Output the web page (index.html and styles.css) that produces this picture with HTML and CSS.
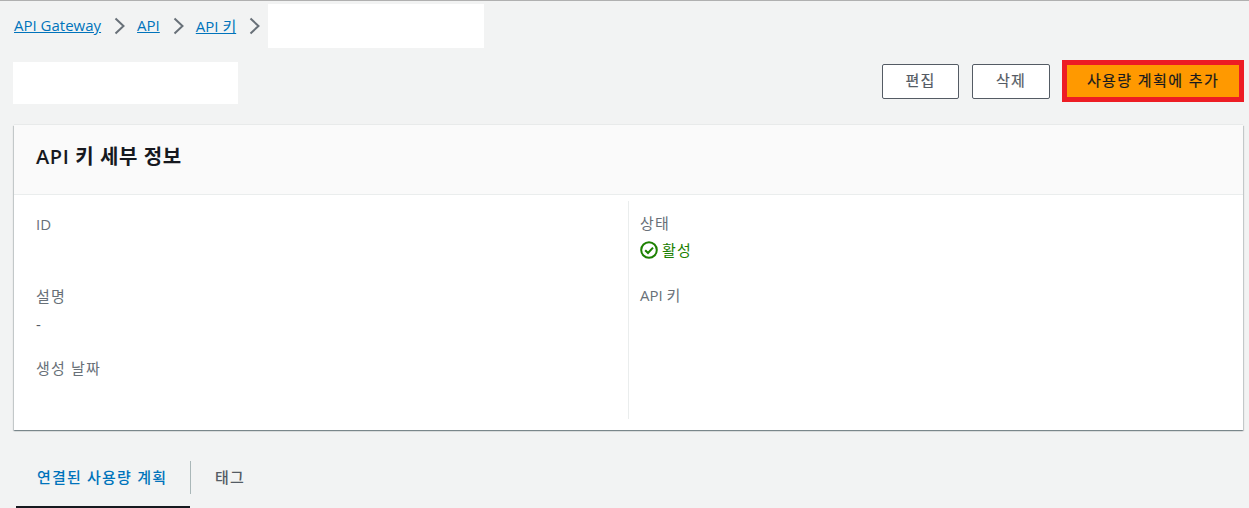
FILE: index.html
```html
<!DOCTYPE html>
<html lang="ko">
<head>
  <meta charset="UTF-8" />
  <title>API 키 세부 정보</title>
  <link rel="stylesheet" href="styles.css">
</head>
<body>
  <div class="page">
    <!-- 경로 -->
    <nav class="breadcrumbs">
      <a href="#">API Gateway</a>
      <svg class="crumb-arrow" viewBox="0 0 11 18"><path d="M1.5 1.5l8 7.5-8 7.5"/></svg>
      <a href="#">API</a>
      <svg class="crumb-arrow" viewBox="0 0 11 18"><path d="M1.5 1.5l8 7.5-8 7.5"/></svg>
      <a href="#">API 키</a>
      <svg class="crumb-arrow" viewBox="0 0 11 18"><path d="M1.5 1.5l8 7.5-8 7.5"/></svg>
      <div class="mask mask-crumb"></div>
    </nav>

    <header class="page-head">
      <div class="mask mask-title"></div>
      <div class="actions">
        <button class="btn btn-edit ko">편집</button>
        <button class="btn btn-delete ko">삭제</button>
        <button class="btn btn-primary ko">사용량 계획에 추가</button>
      </div>
    </header>

    <section class="card">
      <div class="card-head">
        <h2>API 키 세부 정보</h2>
      </div>
      <div class="card-body">
        <div class="col col-left">
          <div class="field field-id"><span class="label">ID</span></div>
          <div class="field field-desc">
            <span class="label ko">설명</span>
            <span class="value">-</span>
          </div>
          <div class="field"><span class="label ko">생성 날짜</span></div>
        </div>
        <div class="col col-right">
          <div class="field field-state">
            <span class="label ko">상태</span>
            <span class="status ko">
              <svg class="status-icon" viewBox="0 0 18 18"><circle cx="9" cy="9" r="7.8"/><path d="M5.2 9.2l2.8 2.8 5-5.4"/></svg>
              활성
            </span>
          </div>
          <div class="field"><span class="label">API 키</span></div>
        </div>
      </div>
    </section>

    <nav class="tabs">
      <a class="tab active ko" href="#">연결된 사용량 계획</a>
      <a class="tab ko" href="#">태그</a>
    </nav>
  </div>
</body>
</html>
```

FILE: styles.css
```css
* {
  box-sizing: border-box;
}

html, body {
  margin: 0;
  padding: 0;
  height: 508px;
  overflow: hidden;
  background-color: #f2f3f3;
  font-family: "Open Sans", "Noto Sans CJK KR", sans-serif;
  font-size: 15px;
  color: #16191f;
}

.page {
  border-top: 1px solid #b0b0b0;
  padding: 3px 5px 0 14px;
}

/* 한글 자간 */
.ko {
  letter-spacing: 1.2px;
}

.mask {
  background-color: white;
}

.breadcrumbs {
  display: flex;
  align-items: center;
  height: 44px;
}

.breadcrumbs a {
  color: #0073bb;
  text-decoration: underline;
  margin-bottom: 2px;
}

.crumb-arrow {
  width: 11px;
  height: 18px;
  margin: 0 12px 0 13px;
  fill: none;
  stroke: #687078;
  stroke-width: 2;
}

.mask-crumb {
  width: 216px;
  height: 44px;
  margin-left: -4px;
}

.page-head {
  display: flex;
  justify-content: space-between;
  align-items: flex-start;
  margin-top: 12px;
}

.mask-title {
  width: 225px;
  height: 42px;
  margin-left: -1px;
  margin-top: 2px;
}

.actions {
  display: flex;
  align-items: center;
}

.btn {
  height: 35px;
  padding: 0 0 3px;
  background-color: white;
  border: 1px solid #545b64;
  border-radius: 2px;
  font-family: inherit;
  font-size: 15px;
  font-weight: 400;
  color: #545b64;
  -webkit-text-stroke: 0.2px currentColor;
}

.btn-edit {
  width: 77px;
  margin-right: 13px;
}

.btn-delete {
  width: 78px;
  margin-right: 12px;
}

.btn-primary {
  height: 42px;
  width: 182px;
  background-color: #ff9900;
  border: 5px solid #ed1c24;
  border-radius: 0;
  color: #16191f;
  letter-spacing: 1.4px;
}

.card {
  width: 1229px;
  height: 305px;
  margin-top: 21px;
  background-color: white;
  box-shadow: 0 1px 1px 0 rgba(0, 28, 36, 0.3), 1px 1px 1px 0 rgba(0, 28, 36, 0.15), -1px 1px 1px 0 rgba(0, 28, 36, 0.15), 0 -1px 0 0 #e8eaea;
}

.card-head {
  height: 70px;
  padding: 0 22px 9px;
  display: flex;
  align-items: center;
  background-color: #fafafa;
  border-bottom: 1px solid #eaeded;
}

.card-head h2 {
  margin: 0;
  font-size: 20px;
  font-weight: 600;
  letter-spacing: 0.6px;
}

.card-body {
  display: flex;
  padding-top: 6px;
}

.col {
  height: 218px;
  padding-top: 13px;
}

.col-left {
  width: 614px;
  padding-left: 22px;
}

.col-right {
  flex: 1;
  padding-left: 11px;
  border-left: 1px solid #eaeded;
  padding-top: 12px;
}

.field {
  display: flex;
  flex-direction: column;
  align-items: flex-start;
}

.field-id {
  height: 72px;
}

.field-desc {
  height: 72px;
}

.field-state {
  height: 72px;
}

.label {
  line-height: 20px;
  color: #687078;
}

.value {
  margin-top: 8px;
  line-height: 20px;
  color: #545b64;
}

.status {
  display: flex;
  align-items: center;
  gap: 4px;
  margin-top: 7px;
  line-height: 20px;
  color: #1d8102;
}

.status-icon {
  width: 18px;
  height: 18px;
  fill: none;
  stroke: #1d8102;
  stroke-width: 2;
}

.tabs {
  display: flex;
  align-items: center;
  margin-top: 31px;
  margin-left: 2px;
}

.tab {
  display: flex;
  align-items: center;
  height: 33px;
  padding: 0 24px 2px;
  font-weight: 500;
  color: #545b64;
  text-decoration: none;
}

.tab.active {
  position: relative;
  width: 175px;
  padding: 0 21px 2px;
  color: #0073bb;
  border-right: 1px solid #aab7b8;
}

/* 활성 탭 밑줄 */
.tab.active::after {
  content: "";
  position: absolute;
  left: 0;
  right: 0;
  top: 45px;
  height: 2px;
  background-color: #16191f;
}
```
